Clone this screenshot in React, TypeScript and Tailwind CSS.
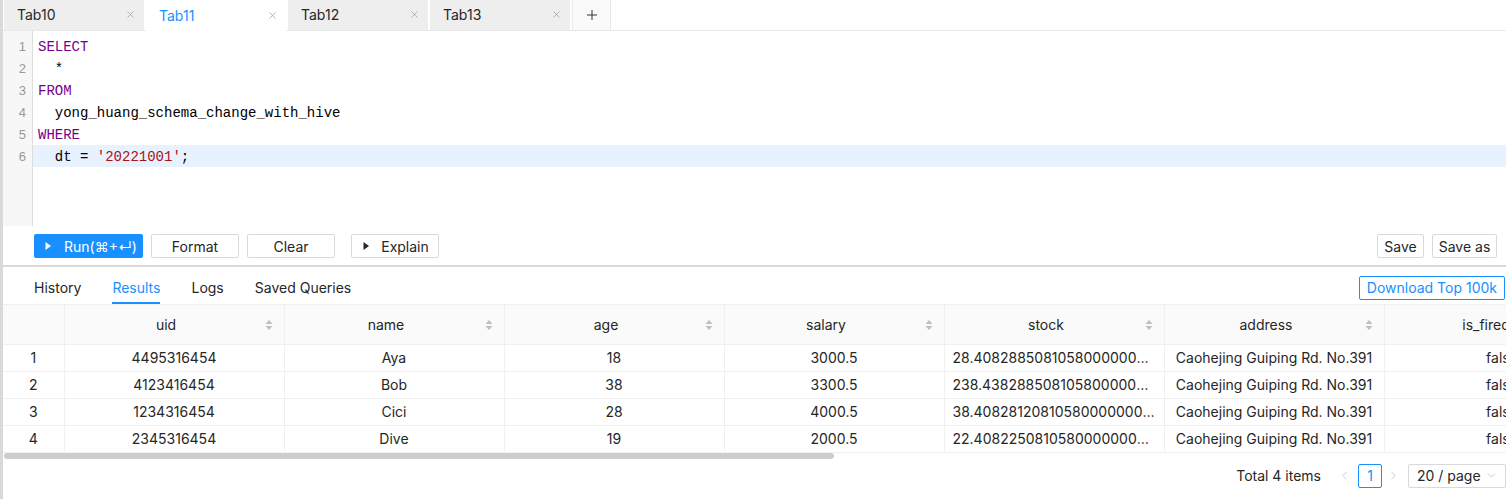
import { ChevronDown, ChevronLeft, ChevronRight, Plus, X } from 'lucide-react';

const tabs = ['Tab10', 'Tab11', 'Tab12', 'Tab13'];

const columns = ['uid', 'name', 'age', 'salary', 'stock', 'address', 'is_fired'];

const rows = [
	['4495316454', 'Aya', '18', '3000.5', '28.40828850810580000000000', 'Caohejing Guiping Rd. No.391', 'false'],
	['4123416454', 'Bob', '38', '3300.5', '238.4382885081058000000000', 'Caohejing Guiping Rd. No.391', 'false'],
	['1234316454', 'Cici', '28', '4000.5', '38.40828120810580000000000', 'Caohejing Guiping Rd. No.391', 'false'],
	['2345316454', 'Dive', '19', '2000.5', '22.40822508105800000000000', 'Caohejing Guiping Rd. No.391', 'false'],
];

function Triangle({ color }: { color: string }) {
	return (
		<svg width="10" height="10" viewBox="0 0 10 10" className={color}>
			<path d="M2.5 1 L8 5 L2.5 9 Z" />
		</svg>
	);
}

function SortIcon() {
	return (
		<svg width="8" height="12" viewBox="0 0 8 12" className="fill-[#bfbfbf]">
			<path d="M4 1 L7.5 5 L0.5 5 Z" />
			<path d="M4 11 L7.5 7 L0.5 7 Z" />
		</svg>
	);
}

function CodeLine({ n, active, children }: { n: number; active?: boolean; children?: React.ReactNode }) {
	return (
		<div className="flex h-[22px] leading-[22px]">
			<div className="w-[30px] shrink-0 bg-[#f7f7f7] border-r border-[#dddddd] text-right pr-[6px] pt-[1px] text-[13px] text-[#999999] font-['Liberation_Sans',sans-serif]">
				{n}
			</div>
			<div className={'flex-1 pl-[5px] pt-[1px] whitespace-pre ' + (active ? 'bg-[#e8f2ff]' : '')}>{children}</div>
		</div>
	);
}

export default function App() {
	return (
		<div className="w-[1511px] h-[499px] bg-white flex overflow-hidden font-['Inter',sans-serif] text-[14px] text-[#262626]">
			<div className="w-[3px] shrink-0 bg-[#d9d9d9]"></div>
			<div className="w-[1503px] shrink-0 flex flex-col">
				{/* file tabs */}
				<div className="h-[31px] flex items-end border-b border-[#e8e8e8] gap-[2px] pl-[1px]">
					{tabs.map((t) => {
						const active = t === 'Tab11';
						return (
							<div
								key={t}
								className={
									'w-[140px] h-[31px] flex items-center justify-between pl-[13px] pr-[8px] ' +
									(active ? 'bg-white text-[#1890ff] -mb-px h-[32px]' : 'bg-[#eeeeee] text-[#262626]')
								}
							>
								<span>{t}</span>
								<X size={11} strokeWidth={1.5} className="text-[#999999]" />
							</div>
						);
					})}
					<div className="w-[39px] h-[31px] flex items-center justify-center bg-[#fafafa] border-x border-t border-[#e8e8e8]">
						<Plus size={16} strokeWidth={1.5} className="text-[#333333]" />
					</div>
				</div>

				{/* editor */}
				<div className="h-[195px] flex flex-col bg-white font-['Liberation_Mono',monospace] text-[14px] text-black">
					<div className="h-[4px] flex">
						<div className="w-[30px] bg-[#f7f7f7] border-r border-[#dddddd]"></div>
					</div>
					<CodeLine n={1}><span className="text-[#770088]">SELECT</span></CodeLine>
					<CodeLine n={2}>{'  *'}</CodeLine>
					<CodeLine n={3}><span className="text-[#770088]">FROM</span></CodeLine>
					<CodeLine n={4}>{'  yong_huang_schema_change_with_hive'}</CodeLine>
					<CodeLine n={5}><span className="text-[#770088]">WHERE</span></CodeLine>
					<CodeLine n={6} active>
						{'  dt = '}
						<span className="text-[#aa1111]">'20221001'</span>;
					</CodeLine>
					<div className="flex-1 flex">
						<div className="w-[30px] bg-[#f7f7f7] border-r border-[#dddddd]"></div>
					</div>
				</div>

				{/* toolbar */}
				<div className="h-[39px] flex items-center pl-[31px] pr-[9px] pt-[1px]">
					<button className="w-[109px] h-[24px] bg-[#1890ff] text-white flex items-center gap-[11px] pl-[9px] rounded-[2px]">
						<Triangle color="fill-white" />
						<span className="font-['Inter','DejaVu_Sans',sans-serif]">Run(⌘+↵)</span>
					</button>
					<button className="ml-[8px] w-[88px] h-[24px] border border-[#d9d9d9] rounded-[2px]">Format</button>
					<button className="ml-[8px] w-[88px] h-[24px] border border-[#d9d9d9] rounded-[2px]">Clear</button>
					<button className="ml-[16px] w-[88px] h-[24px] border border-[#d9d9d9] rounded-[2px] flex items-center justify-center gap-[10px]">
						<Triangle color="fill-[#262626]" />
						Explain
					</button>
					<div className="flex-1"></div>
					<button className="w-[47px] h-[24px] border border-[#d9d9d9] rounded-[2px]">Save</button>
					<button className="ml-[8px] w-[65px] h-[24px] border border-[#d9d9d9] rounded-[2px]">Save as</button>
				</div>
				<div className="h-[2px] bg-[#d9d9d9]"></div>

				{/* result tabs */}
				<div className="h-[38px] flex items-stretch border-b border-[#f0f0f0] pl-[31px] pr-[1px]">
					{['History', 'Results', 'Logs', 'Saved Queries'].map((t) => {
						const active = t === 'Results';
						return (
							<div
								key={t}
								className={
									'flex items-center pt-[6px] mr-[31px] border-b-2 ' +
									(active ? 'text-[#1890ff] border-[#1890ff]' : 'border-transparent')
								}
							>
								{t}
							</div>
						);
					})}
					<div className="flex-1"></div>
					<div className="self-center mb-[-4px] h-[24px] px-[7px] flex items-center border border-[#1890ff] text-[#1890ff] rounded-[2px]">
						Download Top 100k
					</div>
				</div>

				{/* table */}
				<div className="overflow-hidden">
					<table className="table-fixed border-collapse w-[1600px]">
						<colgroup>
							<col className="w-[61px]" />
							{columns.map((c) => (
								<col key={c} className="w-[220px]" />
							))}
						</colgroup>
						<thead>
							<tr className="h-[39px] bg-[#fafafa]">
								<th className="border-r border-b border-[#f0f0f0]"></th>
								{columns.map((c) => (
									<th key={c} className="border-r border-b border-[#f0f0f0] font-normal relative pr-[16px] whitespace-nowrap">
										<span>{c}</span>
										<span className="absolute right-[11px] top-[14px]">
											<SortIcon />
										</span>
									</th>
								))}
							</tr>
						</thead>
						<tbody>
							{rows.map((r, i) => (
								<tr key={i} className="h-[27px]">
									<td className="border-r border-b border-[#f0f0f0] text-center">{i + 1}</td>
									{r.map((v, j) => (
										<td
											key={j}
											className={
												'border-r border-b border-[#f0f0f0] text-center truncate ' +
												(j === r.length - 1 ? 'pl-[24px] pr-[8px]' : 'px-[8px]')
											}
										>
											{v}
										</td>
									))}
								</tr>
							))}
						</tbody>
					</table>
				</div>
				<div className="h-[6px] flex">
					<div className="w-[830px] h-[6px] rounded-full bg-[#cdcdcd] ml-[1px]"></div>
				</div>

				{/* pagination */}
				<div className="flex-1 flex items-start justify-end pt-[5px]">
					<div className="flex items-center h-[24px]">
						<span className="mr-[17px]">Total 4 items</span>
						<ChevronLeft size={13} strokeWidth={1.5} className="text-[#bfbfbf] mr-[7px]" />
						<div className="w-[24px] h-[24px] flex items-center justify-center border border-[#1890ff] text-[#1890ff] rounded-[2px]">1</div>
						<ChevronRight size={13} strokeWidth={1.5} className="text-[#bfbfbf] ml-[5px] mr-[8px]" />
						<div className="w-[98px] h-[24px] flex items-center justify-between pl-[8px] pr-[7px] border border-[#d9d9d9] rounded-[2px]">
							<span>20 / page</span>
							<ChevronDown size={13} strokeWidth={1.5} className="text-[#bfbfbf]" />
						</div>
					</div>
				</div>
			</div>
		</div>
	);
}
